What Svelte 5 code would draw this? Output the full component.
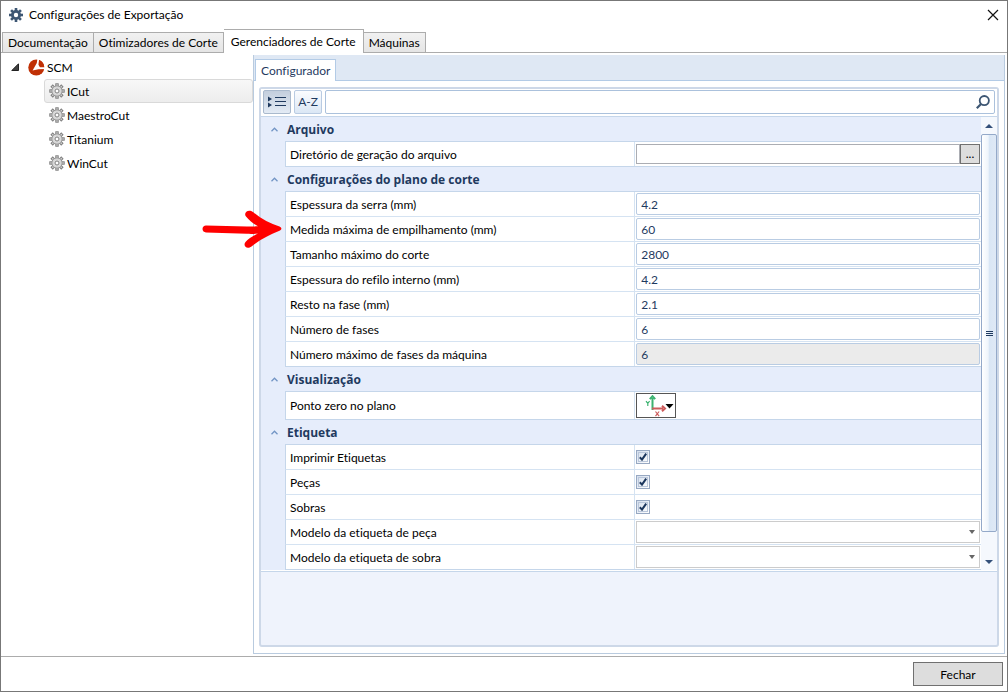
<script>
  const tabs = ['Documentação', 'Otimizadores de Corte', 'Gerenciadores de Corte', 'Máquinas'];
  const machines = ['ICut', 'MaestroCut', 'Titanium', 'WinCut'];

  let activeTab = $state('Gerenciadores de Corte');
  let selected = $state('ICut');
  let sortMode = $state('category');
  let search = $state('');

  let groups = $state([
    {
      name: 'Arquivo',
      open: true,
      rows: [{ id: 'dir', label: 'Diretório de geração do arquivo', type: 'path', value: '' }]
    },
    {
      name: 'Configurações do plano de corte',
      open: true,
      rows: [
        { id: 'serra', label: 'Espessura da serra (mm)', type: 'text', value: '4.2' },
        { id: 'empilhamento', label: 'Medida máxima de empilhamento (mm)', type: 'text', value: '60' },
        { id: 'tamanho', label: 'Tamanho máximo do corte', type: 'text', value: '2800' },
        { id: 'refilo', label: 'Espessura do refilo interno (mm)', type: 'text', value: '4.2' },
        { id: 'resto', label: 'Resto na fase (mm)', type: 'text', value: '2.1' },
        { id: 'fases', label: 'Número de fases', type: 'text', value: '6' },
        { id: 'maxfases', label: 'Número máximo de fases da máquina', type: 'text', value: '6', disabled: true }
      ]
    },
    {
      name: 'Visualização',
      open: true,
      rows: [{ id: 'zero', label: 'Ponto zero no plano', type: 'origin' }]
    },
    {
      name: 'Etiqueta',
      open: true,
      rows: [
        { id: 'imprimir', label: 'Imprimir Etiquetas', type: 'check', value: true },
        { id: 'pecas', label: 'Peças', type: 'check', value: true },
        { id: 'sobras', label: 'Sobras', type: 'check', value: true },
        { id: 'modpeca', label: 'Modelo da etiqueta de peça', type: 'select' },
        { id: 'modsobra', label: 'Modelo da etiqueta de sobra', type: 'select' }
      ]
    }
  ]);

  // Teeth of the gear icons, one every 45 degrees
  const teeth = [0, 45, 90, 135, 180, 225, 270, 315];
</script>

<div class="window">
  <header class="titlebar">
    <svg class="app-icon" width="14" height="14" viewBox="0 0 14 14" fill="#3d5673">
      {#each teeth as a}
        <rect x="5.7" y="0" width="2.6" height="4" transform="rotate({a} 7 7)" />
      {/each}
      <path fill-rule="evenodd" d="M7 2a5 5 0 1 0 0 10a5 5 0 0 0 0-10zM7 4.8a2.2 2.2 0 1 1 0 4.4a2.2 2.2 0 0 1 0-4.4z" />
    </svg>
    <h1>Configurações de Exportação</h1>
    <button class="close" aria-label="Fechar janela">
      <svg width="12" height="12" viewBox="0 0 12 12" stroke="#111" stroke-width="1.2"><path d="M1 1l10 10M11 1L1 11" /></svg>
    </button>
  </header>

  <nav class="tabs">
    {#each tabs as tab}
      <button class="tab" class:active={activeTab === tab} onclick={() => (activeTab = tab)}>{tab}</button>
    {/each}
  </nav>

  <div class="content">
    <aside class="tree">
      <button class="node root">
        <svg width="8" height="8" viewBox="0 0 8 8"><path d="M7.5 0.8v6.7H0.8z" fill="#404040" stroke="#222" /></svg>
        <svg class="scm" width="17" height="17" viewBox="0 0 17 17">
          <circle cx="8.3" cy="8.5" r="8" fill="#c03005" />
          <path d="M9.4 0L8.8 4L4.6 11.4L10.4 10.2L17 10V8.2H12L10.6 6L11.2 0z" fill="#fff" />
          <path d="M11 0.9a8 8 0 0 1 5.2 7L12.4 8L10.7 5.4z" fill="#c03005" />
        </svg>
        <span>SCM</span>
      </button>
      {#each machines as machine}
        <button class="node leaf" class:selected={selected === machine} onclick={() => (selected = machine)}>
          <svg width="16" height="16" viewBox="0 0 16 16">
            <g fill="#d4d4d4" stroke="#808080">
              {#each teeth as a}
                <rect x="6.8" y="0.8" width="2.4" height="3" transform="rotate({a} 8 8)" />
              {/each}
            </g>
            <circle cx="8" cy="8" r="5.2" fill="#d4d4d4" stroke="#969696" />
            <circle cx="8" cy="8" r="3.6" fill="#dcdcdc" />
            <circle cx="8" cy="8" r="2" fill="#fff" stroke="#808080" />
          </svg>
          <span>{machine}</span>
        </button>
      {/each}
    </aside>

    <main class="panel">
      <div class="subtabs">
        <button class="subtab">Configurador</button>
      </div>

      <div class="grid-frame">
        <div class="toolbar">
          <button class="tool" class:on={sortMode === 'category'} aria-label="Categorias" onclick={() => (sortMode = 'category')}>
            <svg width="18" height="12" viewBox="0 0 18 12" fill="#1f3a5f">
              <path d="M0 0.5l4 2.5l-4 2.5zM0 6.5l4 2.5l-4 2.5zM7 1h11v1H7zM7 5h11v1H7zM7 9h11v1H7z" />
            </svg>
          </button>
          <button class="tool" class:on={sortMode === 'alpha'} onclick={() => (sortMode = 'alpha')}>A-Z</button>
          <div class="search">
            <input type="text" aria-label="Pesquisar" bind:value={search} />
            <svg width="14" height="14" viewBox="0 0 14 14" fill="none" stroke="#3d5673">
              <circle cx="8.3" cy="5.6" r="4.6" stroke-width="1.8" />
              <path d="M5 9L0.8 13.2" stroke-width="2.2" />
            </svg>
          </div>
        </div>

        <div class="grid-body">
          <div class="groups">
            {#each groups as group}
              <section class="group">
                <button class="group-toggle" aria-label={group.name} onclick={() => (group.open = !group.open)}>
                  <svg width="7" height="5" viewBox="0 0 7 5" fill="none" stroke="#7295c5" stroke-width="1.3"><path d="M0.5 4.2l3-3l3 3" /></svg>
                </button>
                <div class="group-main">
                  <h2>{group.name}</h2>
                  {#if group.open}
                    {#each group.rows as row (row.id)}
                      <div class="row" class:tall={row.type === 'origin'}>
                        <label for={row.id}>{row.label}</label>
                        <div class="cell">
                          {#if row.type === 'path'}
                            <input class="path" id={row.id} type="text" bind:value={row.value} />
                            <button class="browse">...</button>
                          {:else if row.type === 'text'}
                            <input class="text" id={row.id} type="text" disabled={row.disabled} bind:value={row.value} />
                          {:else if row.type === 'check'}
                            <input class="check" id={row.id} type="checkbox" bind:checked={row.value} />
                            <svg class="tick" width="8" height="8" viewBox="0 0 8 8" fill="none" stroke="#1b365d" stroke-width="2"><path d="M0.8 4.2l2.2 2.4L7.2 0.6" /></svg>
                          {:else if row.type === 'origin'}
                            <button class="origin" id={row.id}>
                              <svg width="29" height="22" viewBox="0 0 29 22" fill="none">
                                <path d="M7.5 15V3M4.8 4.2l2.7-3l2.7 3" stroke="#3cb371" stroke-width="2" />
                                <path d="M1 6.2l1.8 2.2L4.6 6.2M2.8 8.4V11" stroke="#3cb371" stroke-width="1.2" />
                                <path d="M7 13.5h11M17 10.8l3 2.7l-3 2.7" stroke="#cd5c5c" stroke-width="2" />
                                <path d="M10.5 16.5l3.6 4.7M14.1 16.5l-3.6 4.7" stroke="#cd5c5c" stroke-width="1.2" />
                                <path d="M20.5 9h8l-4 4.5z" fill="#000" />
                              </svg>
                            </button>
                          {:else}
                            <select id={row.id}><option></option></select>
                            <svg class="drop" width="6" height="4" viewBox="0 0 6 4"><path d="M0 0h6l-3 4z" fill="#666" /></svg>
                          {/if}
                        </div>
                      </div>
                    {/each}
                  {/if}
                </div>
              </section>
            {/each}
          </div>

          <div class="scrollbar">
            <button aria-label="Subir"><svg width="8" height="4" viewBox="0 0 8 4"><path d="M0 4h8L4 0z" fill="#34507a" /></svg></button>
            <div class="thumb">
              <svg width="7" height="5" viewBox="0 0 7 5" fill="#1f3a5f"><path d="M0 0h7v1H0zM0 2h7v1H0zM0 4h7v1H0z" /></svg>
            </div>
            <button aria-label="Descer"><svg width="8" height="4" viewBox="0 0 8 4"><path d="M0 0h8L4 4z" fill="#34507a" /></svg></button>
          </div>
        </div>
      </div>
    </main>
  </div>

  <footer>
    <button class="btn-close">Fechar</button>
  </footer>

  <svg class="pointer" width="82" height="40" viewBox="0 0 82 40">
    <path d="M4 15.5C2 15.5 0.5 17 0.5 19C0.5 21 2 22.3 4 22.4L45 23.8C49 24 53 23.9 56 23.5C51 26 46 29 43.5 32C40.5 36 45 40 49.5 36.5C58 29.5 68 24.5 77.5 20.8C80 19.6 80 17.8 77.5 16.6C68 13.5 59 9 51 2C46.5 -1.5 41 2.5 44 6.5C47.5 10.8 51 13.5 56 16.3C53 16.5 49 16.5 45 16.4z" fill="#f00" />
  </svg>
</div>

<style>
  :global(body) {
    background: #fff;
  }

  .window {
    position: relative;
    display: flex;
    flex-direction: column;
    box-sizing: border-box;
    min-height: 100vh;
    border: 1px solid #777;
    background: #fff;
    color: #000;
    font-family: Lato, "Open Sans", sans-serif;
    font-size: 12px;
    font-variant-ligatures: none;
    line-height: 16px;
  }

  .window *,
  .window *::before {
    box-sizing: border-box;
  }

  button,
  input,
  select {
    margin: 0;
    padding: 0;
    border: 0;
    border-radius: 0;
    background: none;
    color: inherit;
    font: inherit;
  }

  button {
    white-space: nowrap;
  }

  svg {
    display: block;
    flex: none;
  }

  .titlebar {
    display: flex;
    align-items: center;
    height: 28px;
    padding: 0 8px;
  }

  h1 {
    flex: 1;
    margin: 0 0 0 6px;
    font-size: 12px;
    font-weight: 400;
  }

  .tabs {
    display: flex;
    align-items: flex-end;
    height: 24px;
    padding-left: 1px;
    border-bottom: 1px solid #acacac;
  }

  .tab {
    height: 20px;
    padding: 1px 5px 0;
    border: 1px solid #acacac;
    border-bottom: 0;
    background: linear-gradient(#f1f1f1, #e5e5e5);
  }

  .tab + .tab {
    border-left: 0;
  }

  .tab.active {
    height: 24px;
    margin-bottom: -1px;
    padding: 0 7px;
    background: #fff;
  }

  .content {
    display: flex;
    flex: 1;
    padding: 2px 2px 2px 0;
  }

  .tree {
    flex: none;
    width: 252px;
  }

  .node {
    display: flex;
    align-items: center;
    height: 24px;
    gap: 2px;
    border: 1px solid transparent;
    border-radius: 3px;
  }

  .root {
    padding-left: 9px;
  }

  .scm {
    margin-left: 8px;
  }

  .root,
  .leaf {
    gap: 1px;
  }

  .leaf {
    width: 209px;
    margin-left: 43px;
    padding-left: 4px;
  }

  .node span {
    padding: 1px 0 0 1px;
  }

  .leaf.selected {
    border-color: #d9d9d9;
    background: linear-gradient(#f8f8f8, #ededed);
  }

  .panel {
    display: flex;
    flex: 1;
    flex-direction: column;
    min-width: 0;
    border: 1px solid #b9cbdf;
    border-top: 0;
  }

  .subtabs {
    display: flex;
    align-items: flex-end;
    height: 26px;
    padding-left: 1px;
    border-bottom: 1px solid #b3cbe6;
    background: #dfe8f4;
  }

  .subtab {
    height: 22px;
    margin-bottom: -1px;
    padding: 1px 5px 0;
    border: 1px solid #b3cbe6;
    border-bottom: 0;
    background: #fff;
    color: #1f3a5f;
  }

  .grid-frame {
    display: flex;
    flex: 1;
    flex-direction: column;
    margin: 6px 5px;
    border: 2px solid #cdd8e8;
    border-radius: 3px;
    background: #eff3fc;
  }

  .toolbar {
    display: flex;
    flex: none;
    gap: 3px;
    height: 28px;
    padding: 1px 2px 2px;
    border-bottom: 1px solid #c5d6ea;
    background: #fff;
  }

  .tool {
    display: flex;
    align-items: center;
    justify-content: center;
    width: 28px;
    border: 1px solid #b9cbe2;
    border-radius: 2px;
    background: linear-gradient(#fbfcfe, #dbe7f5);
    color: #1f3a5f;
  }

  .tool.on {
    border-color: #a9b9cd;
    background: linear-gradient(#c3cedd, #e3ebf5);
  }

  .search {
    display: flex;
    flex: 1;
    align-items: center;
    padding-right: 4px;
    border: 1px solid #abc1dc;
    border-radius: 2px;
    background: #fff;
  }

  .search input {
    flex: 1;
    min-width: 0;
    padding: 0 4px;
  }

  .grid-body {
    display: flex;
    padding-bottom: 1px;
    border-bottom: 1px solid #c5d6ea;
    background: #fff;
  }

  .groups {
    flex: 1;
    min-width: 0;
  }

  .group {
    display: flex;
    background: #e6edfb;
  }

  .group-toggle {
    display: flex;
    flex: none;
    align-items: center;
    justify-content: center;
    width: 24px;
    height: 25px;
    padding-left: 3px;
  }

  .group-main {
    flex: 1;
    min-width: 0;
  }

  h2 {
    height: 25px;
    margin: 0;
    padding-left: 2px;
    border-bottom: 1px solid #c5d6ea;
    color: #1f3a5f;
    font-family: "Open Sans", sans-serif;
    font-size: 12px;
    font-weight: 700;
    line-height: 26px;
  }

  .row {
    display: grid;
    grid-template-columns: 101fr 100fr;
    height: 25px;
    border-bottom: 1px solid #d5e3f2;
    border-left: 1px solid #c5d6ea;
    background: #fff;
  }

  .row.tall {
    height: 28px;
  }

  .row:last-child {
    border-bottom-color: #c5d6ea;
  }

  .row label {
    display: flex;
    align-items: center;
    padding: 1px 0 0 4px;
    border-right: 1px solid #d5e3f2;
    white-space: nowrap;
  }

  .cell {
    display: flex;
    position: relative;
    align-items: center;
    min-width: 0;
    padding: 1px;
  }

  .text {
    flex: 1;
    min-width: 0;
    height: 22px;
    padding: 1px 4px 0;
    border: 1px solid #b9cce3;
    border-radius: 2px;
    color: #1f3a5f;
  }

  .text:disabled {
    background: #ebebeb;
  }

  .path {
    flex: 1;
    min-width: 0;
    height: 20px;
    padding: 0 5px;
    border: 1px solid #abadb3;
  }

  .browse {
    width: 20px;
    height: 20px;
    border: 1px solid #707070;
    background: #ddd;
  }

  .check {
    appearance: none;
    width: 14px;
    height: 14px;
    border: 1px solid #97a8c2;
    outline: 1px solid #b9c6da;
    outline-offset: -3px;
    background: linear-gradient(135deg, #d3deed, #fff);
  }

  .tick {
    position: absolute;
    left: 4px;
    pointer-events: none;
  }

  .check:not(:checked) + .tick {
    display: none;
  }

  .origin {
    display: flex;
    align-items: center;
    justify-content: flex-end;
    width: 40px;
    height: 25px;
    padding-right: 1px;
    border: 1px solid #555;
    background: #fff;
  }

  select {
    appearance: none;
    flex: 1;
    height: 22px;
    border: 1px solid #ccc;
    background: #fff;
  }

  .drop {
    position: absolute;
    right: 6px;
    pointer-events: none;
  }

  .scrollbar {
    display: flex;
    flex: none;
    flex-direction: column;
    width: 16px;
    background: #f5f8fd;
  }

  .scrollbar button {
    display: flex;
    align-items: center;
    justify-content: center;
    height: 17px;
  }

  .scrollbar button:last-child {
    height: 16px;
    margin-top: 22px;
  }

  .thumb {
    display: flex;
    flex: 1;
    align-items: center;
    justify-content: center;
    border: 1px solid #94a9c9;
    border-radius: 2px;
    background: linear-gradient(90deg, #fff, #eef4fb 45%, #d9e6f5 50%, #dfe9f6);
  }

  footer {
    display: flex;
    justify-content: flex-end;
    padding: 5px 4px;
    border-top: 1px solid #acacac;
  }

  .btn-close {
    width: 90px;
    height: 24px;
    padding-top: 1px;
    border: 1px solid #707070;
    background: #ddd;
  }

  .pointer {
    position: absolute;
    top: 209px;
    left: 201px;
    pointer-events: none;
  }
</style>
